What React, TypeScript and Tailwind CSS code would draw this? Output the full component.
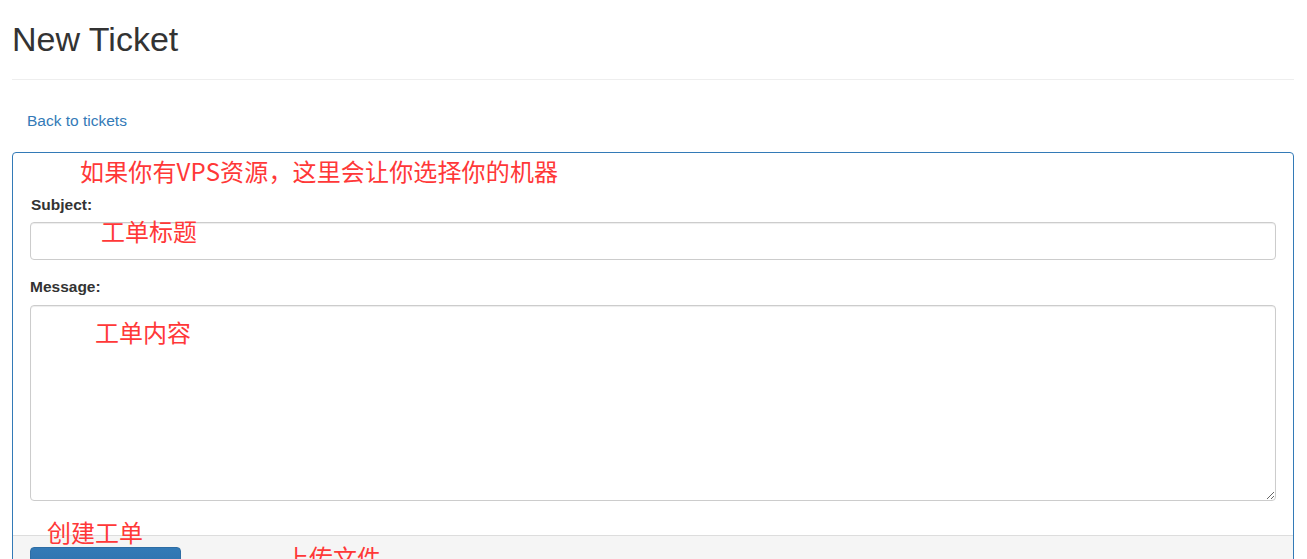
import React from "react";

const sans = { fontFamily: '"Liberation Sans", Arial, sans-serif' };

function Note({ children, className }: { children: React.ReactNode; className: string }) {
  return (
    <div
      className={`absolute whitespace-nowrap text-[24px] leading-[24px] text-[#ff3838] ${className}`}
      style={{ fontFamily: '"Noto Sans CJK SC", "Liberation Sans", sans-serif' }}
    >
      {children}
    </div>
  );
}

export default function App() {
  return (
    <div className="relative min-h-screen bg-white text-[#333] overflow-hidden" style={sans}>
      <div className="pl-[12px] pr-[13px] pt-[20px]">
        <div className="border-b border-[#eeeeee] pb-[20px]">
          <h1 className="h-[39px] text-[34px] leading-[39px] font-normal text-[#333]">New Ticket</h1>
        </div>

        <div className="mt-[30px] pl-[15px] h-[22px] text-[15.5px] leading-[22px]">
          <a href="#" className="text-[#337ab7]">Back to tickets</a>
        </div>

        <div className="mt-[20px] rounded-[4px] border border-[#337ab7]">
          <div className="flex flex-col px-[17px] pt-[41px] pb-[34px]">
            <label className="ml-[1px] mb-[6px] text-[15.5px] leading-[22px] font-bold">Subject:</label>
            <input
              type="text"
              className="h-[38px] w-full rounded-[4px] border border-[#cccccc] bg-white shadow-[inset_0_1px_1px_rgba(0,0,0,0.075)] outline-none"
            />
            <label className="mt-[16px] mb-[7px] text-[15.5px] leading-[22px] font-bold">Message:</label>
            <textarea className="h-[196px] w-full rounded-[4px] border border-[#cccccc] bg-white shadow-[inset_0_1px_1px_rgba(0,0,0,0.075)] outline-none" />
          </div>
          <div className="flex border-t border-[#dddddd] bg-[#f5f5f5] px-[17px] pt-[11px] pb-[11px] rounded-b-[3px]">
            <button className="h-[37px] w-[151px] rounded-[4px] border border-[#2e6da4] bg-gradient-to-b from-[#337ab7] to-[#2e6da4] text-[15.5px] text-white">
              Create Ticket
            </button>
          </div>
        </div>
        <div className="h-[40px]" />
      </div>

      <Note className="left-[80px] top-[159px] tracking-[0.15px]">如果你有VPS资源，这里会让你选择你的机器</Note>
      <Note className="left-[101px] top-[219px]">工单标题</Note>
      <Note className="left-[95px] top-[320px]">工单内容</Note>
      <Note className="left-[47px] top-[520px]">创建工单</Note>
      <Note className="left-[285px] top-[545px]">上传文件</Note>
    </div>
  );
}
